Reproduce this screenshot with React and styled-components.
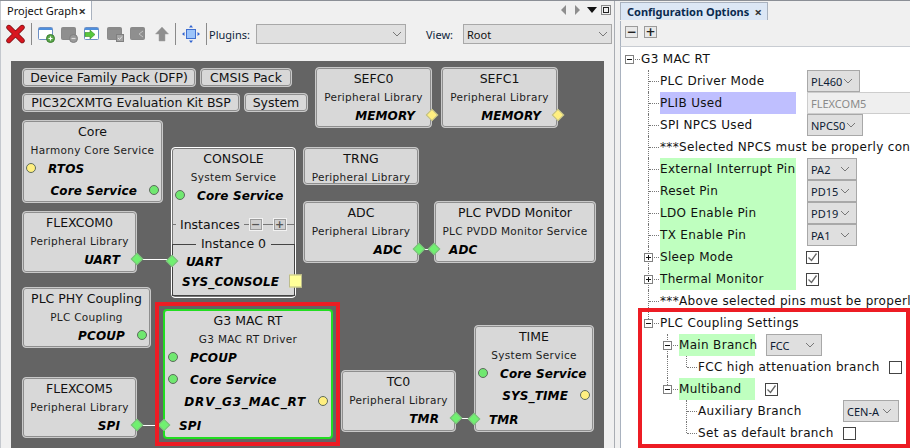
import React from "react";
import styled, { createGlobalStyle } from "styled-components";

const GlobalStyle = createGlobalStyle`
	html, body {
		margin: 0;
		padding: 0;
		background: #f0f0f0;
		overflow: hidden;
	}
	#root {
		width: 910px;
		height: 448px;
	}
	* {
		box-sizing: border-box;
	}
`;

const UI_FONT = `"DejaVu Sans", "Noto Sans", sans-serif`;
const CHROME_FONT = `"Noto Sans", "DejaVu Sans", sans-serif`;

// page layout
const Page = styled.div`
	display: flex;
	width: 910px;
	height: 448px;
	overflow: hidden;
	font-family: ${UI_FONT};
	font-size: 12px;
	color: #111;
	background: #f0f0f0;
	border-top: 1px solid #8b8f96;
`;

const GraphPanel = styled.section`
	display: flex;
	flex-direction: column;
	width: 615px;
	flex: none;
	border-left: 1px solid #c4c8ce;
	border-right: 1px solid #a9adb3;
`;

const ConfigPanel = styled.section`
	display: flex;
	flex-direction: column;
	flex: 1;
	min-width: 0;
	margin-left: 5px;
	padding-top: 1px;
	position: relative;
`;

// tabs
const TabBar = styled.div`
	display: flex;
	align-items: flex-start;
	height: 19px;
	flex: none;
`;

const Tab = styled.div`
	display: flex;
	align-items: center;
	justify-content: space-between;
	height: ${(p) => (p.$active ? 18 : 19)}px;
	width: ${(p) => p.$width}px;
	padding: 0 5px 0 6px;
	background: ${(p) => (p.$active ? "#dce7f5" : "#fff")};
	border: 1px solid #a9b2bf;
	border-left: ${(p) => (p.$active ? "1px solid #a9b2bf" : "none")};
	border-top: ${(p) => (p.$active ? "1px solid #a9b2bf" : "none")};
	border-bottom: none;
	font-family: ${CHROME_FONT};
	font-weight: ${(p) => (p.$active ? 700 : 400)};
	font-size: 11px;
	color: ${(p) => (p.$active ? "#0a2a4f" : "#111")};
	white-space: nowrap;
`;

const TabClose = styled.span`
	font-size: 13px;
	font-weight: 700;
	color: #333;
`;

const ViewControls = styled.div`
	display: flex;
	align-items: center;
	gap: 4px;
	margin-left: auto;
	height: 14px;
	margin-top: 2px;
	margin-right: 2px;
`;

// toolbar
const Toolbar = styled.div`
	display: flex;
	align-items: center;
	height: 41px;
	flex: none;
	padding: 0 0 13px 5px;
`;

const ToolIcon = styled.svg`
	flex: none;
	display: block;
	margin-right: ${(p) => p.$after ?? 6}px;
`;

const ToolSeparator = styled.span`
	width: 1px;
	height: 22px;
	flex: none;
	background: #8a8a8a;
	margin-right: ${(p) => p.$after ?? 6}px;
`;

const ToolLabel = styled.span`
	flex: none;
	width: ${(p) => p.$width}px;
	font-family: ${CHROME_FONT};
	font-size: 11px;
	color: #0e1e3a;
`;

const ToolCombo = styled.div`
	display: flex;
	align-items: center;
	justify-content: space-between;
	width: ${(p) => p.$width}px;
	height: 20px;
	flex: none;
	padding: 0 3px;
	background: #e0e0e0;
	border: 1px solid #a8a8a8;
	font-family: ${CHROME_FONT};
	font-size: 11px;
	margin-right: ${(p) => p.$after ?? 0}px;
`;

// diagram
const Canvas = styled.div`
	position: relative;
	width: 593px;
	height: 387px;
	margin-left: 10px;
	background: #646464;
	flex: none;
	overflow: hidden;
`;

const Pack = styled.div`
	position: absolute;
	left: ${(p) => p.$x - 11}px;
	top: ${(p) => p.$y - 61}px;
	width: ${(p) => p.$w}px;
	height: 19px;
	display: flex;
	align-items: center;
	justify-content: center;
	background: #d8d8d8;
	border: 1px solid #c9c9c9;
	border-radius: 4px;
	box-shadow: inset 0 0 0 1px #8e8e8e;
	font-size: 12.5px;
	white-space: nowrap;
`;

const Node = styled.div`
	position: absolute;
	left: ${(p) => p.$x - 11}px;
	top: ${(p) => p.$y - 61}px;
	width: ${(p) => p.$w}px;
	height: ${(p) => p.$h}px;
	background: #d8d8d8;
	border: ${(p) => (p.$focus ? "2px solid #22dd22" : p.$bright ? "1px solid #fff" : "1px solid #c9c9c9")};
	border-radius: 4px;
	box-shadow: ${(p) => (p.$focus ? "none" : `inset 0 0 0 1px ${p.$bright ? "#777" : "#8e8e8e"}`)};
`;

const NodeTitle = styled.div`
	height: 20px;
	line-height: 21px;
	text-align: center;
	font-size: 12.5px;
	white-space: nowrap;
	margin-top: ${(p) => (p.$focus ? "-1px" : 0)};
`;

const NodeSub = styled.div`
	height: 16px;
	line-height: 18px;
	text-align: center;
	font-size: 10.5px;
	letter-spacing: 0.3px;
	color: #1c1c1c;
	white-space: nowrap;
`;

const Port = styled.div`
	position: relative;
	display: flex;
	align-items: center;
	justify-content: ${(p) => (p.$side === "left" ? "flex-start" : "flex-end")};
	gap: 12px;
	height: 22px;
	margin-top: ${(p) => p.$gap ?? 0}px;
	padding: ${(p) => (p.$side === "left" ? `0 0 0 ${p.$pad ?? 3}px` : `0 ${p.$pad ?? 3}px 0 0`)};
	font-size: 12px;
	font-weight: 700;
	font-style: italic;
	letter-spacing: ${(p) => p.$spread ?? 0.12}px;
	color: #000;
	white-space: nowrap;
`;

const PortText = styled.span`
	padding-top: 2px;
`;

const Dot = styled.span`
	width: 10px;
	height: 10px;
	flex: none;
	border-radius: 50%;
	background: ${(p) => (p.$tone === "yellow" ? "#ffef80" : "#70e870")};
	border: 1px solid #5d6b5d;
`;

const Diamond = styled.span`
	position: absolute;
	top: 50%;
	left: ${(p) => (p.$side === "left" ? "-1px" : "auto")};
	right: ${(p) => (p.$side === "left" ? "auto" : "-1px")};
	width: 9px;
	height: 9px;
	transform: translate(${(p) => (p.$side === "left" ? "-4.5px" : "4.5px")}, -50%) rotate(45deg);
	background: ${(p) => (p.$tone === "yellow" ? "#ffef80" : "#70f070")};
	border: 1px solid ${(p) => (p.$tone === "yellow" ? "#b9b98a" : "#7fb77f")};
	z-index: 2;
`;

const SquarePin = styled.span`
	position: absolute;
	right: -8px;
	top: 50%;
	width: 13px;
	height: 13px;
	transform: translateY(-50%);
	background: #ffff99;
	border: 1px solid #bdbd8c;
	z-index: 2;
`;

const Wire = styled.span`
	position: absolute;
	left: ${(p) => p.$x - 11}px;
	top: ${(p) => p.$y - 61}px;
	width: ${(p) => p.$w}px;
	height: 1px;
	background: #fff;
	z-index: 1;
`;

const InstancesBar = styled.div`
	display: flex;
	align-items: center;
	height: 20px;
	margin-top: 8px;
	font-size: 12.5px;
`;

const BarStroke = styled.span`
	height: 1px;
	width: ${(p) => p.$w}px;
	flex: ${(p) => (p.$grow ? 1 : "none")};
	background: #777;
`;

const InstanceLabel = styled.span`
	margin: 0 4px;
`;

const MiniButton = styled.span`
	width: 14px;
	height: 13px;
	flex: none;
	display: flex;
	align-items: center;
	justify-content: center;
	background: #cfcfcf;
	border: 1px solid #f2f2f2;
	box-shadow: inset 0 0 0 1px #9c9c9c;
	font-size: 11px;
	font-weight: 700;
	line-height: 1;
	color: #555;
`;

const InstanceBox = styled.fieldset`
	margin: 2px 0 0;
	padding: 0;
	height: 60px;
	border: 1px solid #444;
	border-radius: 0;
	min-width: 0;
`;

const InstanceLegend = styled.legend`
	margin: 0 auto;
	padding: 0 5px;
	font-size: 12.5px;
	line-height: 16px;
`;

const Highlight = styled.div`
	position: absolute;
	left: ${(p) => p.$x}px;
	top: ${(p) => p.$y}px;
	width: ${(p) => p.$w}px;
	height: ${(p) => p.$h}px;
	border: 4px solid #ed1c24;
	pointer-events: none;
	z-index: 3;
`;

// config tree
const ConfigToolbar = styled.div`
	display: flex;
	align-items: center;
	gap: 6px;
	height: 26px;
	flex: none;
	padding: 0 0 4px 4px;
	border-left: 1px solid #a9b2bf;
	border-bottom: 1px solid #c8ccd2;
`;

const TreeToggle = styled.span`
	width: 13px;
	height: 12px;
	display: flex;
	align-items: center;
	justify-content: center;
	background: #e8e8e8;
	border: 1px solid #9a9a9a;
	font-size: 12px;
	font-weight: 700;
	line-height: 1;
	color: #222;
`;

const Tree = styled.div`
	flex: 1;
	background: #fff;
	border-left: 1px solid #a9b2bf;
	padding: 1px 0 0 1px;
	overflow: hidden;
`;

const TreeRow = styled.div`
	display: flex;
	align-items: center;
	height: 22px;
	white-space: nowrap;
`;

const Indent = styled.span`
	position: relative;
	width: 19px;
	height: 22px;
	flex: none;
	&::before {
		content: "";
		display: ${(p) => (p.$line ? "block" : "none")};
		position: absolute;
		left: 7px;
		top: 0;
		bottom: 0;
		border-left: 1px dotted #777;
	}
`;

const Twig = styled.span`
	position: relative;
	width: 19px;
	height: 22px;
	flex: none;
	&::before {
		content: "";
		display: ${(p) => (p.$root ? "none" : "block")};
		position: absolute;
		left: 7px;
		top: 0;
		height: ${(p) => (p.$last ? "11px" : "22px")};
		border-left: 1px dotted #777;
	}
	&::after {
		content: "";
		position: absolute;
		left: 8px;
		right: 1px;
		top: 11px;
		border-top: 1px dotted #777;
	}
`;

const Expander = styled.span`
	position: absolute;
	left: 3px;
	top: 7px;
	width: 9px;
	height: 9px;
	background: #fff;
	border: 1px solid #808080;
	z-index: 1;
	&::before {
		content: "";
		position: absolute;
		left: 1px;
		right: 1px;
		top: 3px;
		height: 1px;
		background: #111;
	}
	&::after {
		content: "";
		display: ${(p) => (p.$open ? "none" : "block")};
		position: absolute;
		top: 1px;
		bottom: 1px;
		left: 3px;
		width: 1px;
		background: #111;
	}
`;

const Label = styled.span`
	display: flex;
	align-items: center;
	flex: none;
	height: 22px;
	width: ${(p) => (p.$width ? `${p.$width}px` : "auto")};
	background: ${(p) => (p.$tone === "green" ? "#bfffbf" : p.$tone === "blue" ? "#bfbfff" : "transparent")};
	font-size: 12px;
	letter-spacing: 0.33px;
`;

const Combo = styled.span`
	display: flex;
	align-items: center;
	justify-content: space-between;
	width: ${(p) => p.$width}px;
	height: 22px;
	flex: none;
	margin-left: 11px;
	padding: 0 6px 0 3px;
	background: ${(p) => (p.$disabled ? "#efefef" : "#dfdfdf")};
	border: 1px solid ${(p) => (p.$disabled ? "#cdcdcd" : "#a8a8a8")};
	color: ${(p) => (p.$disabled ? "#8a8a8a" : "#0d1b33")};
	font-family: ${CHROME_FONT};
	font-size: 11px;
`;

const CheckBox = styled.span`
	display: flex;
	align-items: center;
	justify-content: center;
	width: 13px;
	height: 13px;
	flex: none;
	margin-left: 10px;
	background: #fff;
	border: 1px solid #444;
`;

const Chevron = () => (
	<svg width="10" height="6" viewBox="0 0 10 6">
		<path d="M1 1l4 4 4-4" fill="none" stroke="#777" strokeWidth="1" />
	</svg>
);

const Tick = () => (
	<svg width="11" height="11" viewBox="0 0 11 11">
		<path d="M1.5 5.5l3 3 5-7" fill="none" stroke="#666" strokeWidth="1.3" />
	</svg>
);

const DeleteIcon = () => (
	<ToolIcon width="19" height="20" viewBox="0 0 20 20" $after={6}>
		<path d="M3 3l14 14M17 3L3 17" stroke="#7d1015" strokeWidth="5.4" strokeLinecap="round" />
		<path d="M3 3l14 14M17 3L3 17" stroke="#d8161f" strokeWidth="3.8" strokeLinecap="round" />
	</ToolIcon>
);

const WindowIcon = ({ after, badge, gray, children }) => (
	<ToolIcon width="17" height="17" viewBox="0 0 17 17" $after={after}>
		<rect x="0.5" y="1.5" width="14" height="12" rx="1" fill={gray ? "#8f8f8f" : "#fff"} stroke={gray ? "#8a8a8a" : "#6d8fc4"} />
		<rect x="1" y="2" width="13" height="2" fill={gray ? "#8a8a8a" : "#4f8fdc"} />
		{children}
		{badge}
	</ToolIcon>
);

const GraphToolbar = () => (
	<Toolbar>
		<DeleteIcon />
		<ToolSeparator $after={6} />
		<WindowIcon
			after={6}
			badge={
				<>
					<circle cx="12.5" cy="12.5" r="4" fill="#5aa84a" stroke="#3c7d30" />
					<path d="M12.5 10.5v4M10.5 12.5h4" stroke="#fff" strokeWidth="1.2" />
				</>
			}
		/>
		<WindowIcon
			gray
			after={6}
			badge={
				<>
					<circle cx="12.5" cy="12.5" r="4" fill="#9a9a9a" stroke="#808080" />
					<path d="M10.5 12.5h4" stroke="#ddd" strokeWidth="1.2" />
				</>
			}
		/>
		<WindowIcon after={6}>
			<path d="M1 6.5h5V4l5 4.5-5 4.5v-2.5H1z" fill="#58c83c" stroke="#3a8a2a" strokeWidth="0.6" />
		</WindowIcon>
		<WindowIcon
			gray
			after={6}
			badge={
				<>
					<rect x="9.5" y="8.5" width="7" height="7" fill="#a5a5a5" stroke="#808080" />
					<path d="M11 12l1.5 1.5L15 10.5" fill="none" stroke="#e0e0e0" />
				</>
			}
		/>
		<WindowIcon gray after={8}>
			<path d="M13 5L9 8l4 3" fill="none" stroke="#c4c4c4" />
		</WindowIcon>
		<ToolIcon width="14" height="16" viewBox="0 0 14 16" $after={6}>
			<path d="M7 1l6.5 7H10v7H4V8H.5z" fill="#8e8e8e" stroke="#a0a0a0" strokeWidth="0.5" />
		</ToolIcon>
		<ToolSeparator $after={6} />
		<ToolIcon width="18" height="18" viewBox="0 0 18 18" $after={6}>
			<rect x="4.5" y="4.5" width="9" height="9" fill="#9cc4fa" stroke="#3f6fd0" />
			<path d="M9 0l2 2.5H7zM9 18l2-2.5H7zM0 9l2.5-2v4zM18 9l-2.5-2v4z" fill="#2f62d0" />
		</ToolIcon>
		<ToolSeparator $after={2} />
		<ToolLabel $width={47}>Plugins:</ToolLabel>
		<ToolCombo $width={150} $after={20}>
			<span />
			<Chevron />
		</ToolCombo>
		<ToolLabel $width={37}>View:</ToolLabel>
		<ToolCombo $width={149}>
			<span>Root</span>
			<Chevron />
		</ToolCombo>
	</Toolbar>
);

const nodeData = [
	{
		id: "core", x: 22, y: 120, w: 141, h: 83, title: "Core", sub: "Harmony Core Service",
		ports: [
			{ label: "RTOS", side: "left", dot: "yellow" },
			{ label: "Core Service", side: "right", dot: "green" },
		],
	},
	{
		id: "flexcom0", x: 22, y: 211, w: 115, h: 62, title: "FLEXCOM0", sub: "Peripheral Library",
		ports: [{ label: "UART", side: "right", diamond: "green" }],
	},
	{
		id: "phy", x: 22, y: 287, w: 129, h: 61, title: "PLC PHY Coupling", sub: "PLC Coupling",
		ports: [{ label: "PCOUP", side: "right", dot: "green" }],
	},
	{
		id: "flexcom5", x: 22, y: 377, w: 115, h: 61, title: "FLEXCOM5", sub: "Peripheral Library",
		ports: [{ label: "SPI", side: "right", diamond: "green" }],
	},
	{
		id: "sefc0", x: 315, y: 67, w: 117, h: 61, title: "SEFC0", sub: "Peripheral Library",
		ports: [{ label: "MEMORY", side: "right", diamond: "yellow" }],
	},
	{
		id: "sefc1", x: 441, y: 67, w: 117, h: 61, title: "SEFC1", sub: "Peripheral Library",
		ports: [{ label: "MEMORY", side: "right", diamond: "yellow" }],
	},
	{ id: "trng", x: 303, y: 147, w: 116, h: 38, title: "TRNG", sub: "Peripheral Library", ports: [] },
	{
		id: "adc", x: 303, y: 201, w: 116, h: 62, title: "ADC", sub: "Peripheral Library",
		ports: [{ label: "ADC", side: "right", diamond: "green" }],
	},
	{
		id: "pvdd", x: 434, y: 201, w: 162, h: 62, title: "PLC PVDD Monitor", sub: "PLC PVDD Monitor Service",
		ports: [{ label: "ADC", side: "left", diamond: "green" }],
	},
	{
		id: "g3", x: 163, y: 309, w: 170, h: 130, title: "G3 MAC RT", sub: "G3 MAC RT Driver", focus: true,
		ports: [
			{ label: "PCOUP", side: "left", dot: "green" },
			{ label: "Core Service", side: "left", dot: "green" },
			{ label: "DRV_G3_MAC_RT", side: "right", dot: "yellow", spread: 0.8 },
			{ label: "SPI", side: "left", diamond: "green", gap: 2 },
		],
	},
	{
		id: "tc0", x: 341, y: 370, w: 115, h: 62, title: "TC0", sub: "Peripheral Library",
		ports: [{ label: "TMR", side: "right", diamond: "green" }],
	},
	{
		id: "time", x: 474, y: 325, w: 120, h: 107, title: "TIME", sub: "System Service",
		ports: [
			{ label: "Core Service", side: "left", dot: "green" },
			{ label: "SYS_TIME", side: "right", dot: "yellow" },
			{ label: "TMR", side: "left", diamond: "green", gap: 2 },
		],
	},
];

const NodePort = ({ port }) => {
	const pad = port.diamond ? (port.side === "left" ? 14 : 16) : undefined;
	return (
		<Port $side={port.side} $gap={port.gap} $pad={pad} $spread={port.spread}>
			{port.side === "left" && port.dot && <Dot $tone={port.dot} />}
			{port.diamond && <Diamond $side={port.side} $tone={port.diamond} />}
			<PortText>{port.label}</PortText>
			{port.side === "right" && port.dot && <Dot $tone={port.dot} />}
		</Port>
	);
};

const ConsoleNode = () => (
	<Node $x={171} $y={147} $w={125} $h={151} $bright>
		<NodeTitle>CONSOLE</NodeTitle>
		<NodeSub>System Service</NodeSub>
		<NodePort port={{ label: "Core Service", side: "left", dot: "green" }} />
		<InstancesBar>
			<BarStroke $w={4} />
			<InstanceLabel>Instances</InstanceLabel>
			<BarStroke $w={5} />
			<MiniButton>−</MiniButton>
			<BarStroke $w={10} />
			<MiniButton>+</MiniButton>
			<BarStroke $grow />
		</InstancesBar>
		<InstanceBox>
			<InstanceLegend>Instance 0</InstanceLegend>
			<Port $side="left" $pad={13} $gap={-2}>
				<Diamond $side="left" $tone="green" />
				<PortText>UART</PortText>
			</Port>
			<Port $side="right" $pad={15} $gap={-2}>
				<PortText>SYS_CONSOLE</PortText>
				<SquarePin />
			</Port>
		</InstanceBox>
	</Node>
);

const DiagramCanvas = () => (
	<Canvas>
		<Pack $x={22} $y={68} $w={174}>Device Family Pack (DFP)</Pack>
		<Pack $x={200} $y={68} $w={92}>CMSIS Pack</Pack>
		<Pack $x={22} $y={93} $w={218}>PIC32CXMTG Evaluation Kit BSP</Pack>
		<Pack $x={244} $y={93} $w={64}>System</Pack>
		{nodeData.map((n) => (
			<Node key={n.id} $x={n.x} $y={n.y} $w={n.w} $h={n.h} $focus={n.focus}>
				<NodeTitle $focus={n.focus}>{n.title}</NodeTitle>
				<NodeSub>{n.sub}</NodeSub>
				{n.ports.map((p) => (
					<NodePort key={p.label} port={p} />
				))}
			</Node>
		))}
		<ConsoleNode />
		<Wire $x={137} $y={259} $w={33} />
		<Wire $x={137} $y={425} $w={27} />
		<Wire $x={419} $y={249} $w={15} />
		<Wire $x={456} $y={418} $w={18} />
		<Highlight $x={144} $y={241} $w={185} $h={144} />
	</Canvas>
);

const treeRows = [
	{ guides: [], root: true, open: true, label: "G3 MAC RT" },
	{ guides: [false], label: "PLC Driver Mode", width: 136, combo: { text: "PL460", width: 53 } },
	{ guides: [false], label: "PLIB Used", width: 136, tone: "blue", combo: { text: "FLEXCOM5", width: 110, disabled: true } },
	{ guides: [false], label: "SPI NPCS Used", width: 136, combo: { text: "NPCS0", width: 56 } },
	{ guides: [false], label: "***Selected NPCS must be properly configured" },
	{ guides: [false], label: "External Interrupt Pin", width: 136, tone: "green", combo: { text: "PA2", width: 50 } },
	{ guides: [false], label: "Reset Pin", width: 136, tone: "green", combo: { text: "PD15", width: 50 } },
	{ guides: [false], label: "LDO Enable Pin", width: 136, tone: "green", combo: { text: "PD19", width: 50 } },
	{ guides: [false], label: "TX Enable Pin", width: 136, tone: "green", combo: { text: "PA1", width: 50 } },
	{ guides: [false], label: "Sleep Mode", width: 136, tone: "green", closed: true, check: true },
	{ guides: [false], label: "Thermal Monitor", width: 136, tone: "green", closed: true, check: true },
	{ guides: [false], label: "***Above selected pins must be properly configured" },
	{ guides: [false], label: "PLC Coupling Settings", open: true, last: true },
	{ guides: [false, false], label: "Main Branch", width: 76, tone: "green", open: true, combo: { text: "FCC", width: 56 } },
	{ guides: [false, false, true], label: "FCC high attenuation branch", width: 181, last: true, check: false },
	{ guides: [false, false], label: "Multiband", width: 76, tone: "green", open: true, last: true, check: true },
	{ guides: [false, false, false], label: "Auxiliary Branch", width: 134, combo: { text: "CEN-A", width: 56 } },
	{ guides: [false, false, false], label: "Set as default branch", width: 135, last: true, check: false },
];

const ConfigTree = () => (
	<Tree>
		{treeRows.map((row) => (
			<TreeRow key={row.label}>
				{row.guides.map((line, i) => (
					<Indent key={i} $line={line} />
				))}
				<Twig $root={row.root} $last={row.last}>
					{(row.open || row.closed) && <Expander $open={row.open} />}
				</Twig>
				<Label $width={row.width} $tone={row.tone}>
					{row.label}
				</Label>
				{row.combo && (
					<Combo $width={row.combo.width} $disabled={row.combo.disabled}>
						{row.combo.text}
						{!row.combo.disabled && <Chevron />}
					</Combo>
				)}
				{row.check !== undefined && <CheckBox>{row.check && <Tick />}</CheckBox>}
			</TreeRow>
		))}
	</Tree>
);

export default function App() {
	return (
		<Page>
			<GlobalStyle />
			<GraphPanel>
				<TabBar>
					<Tab $width={91}>
						Project Graph
						<TabClose>×</TabClose>
					</Tab>
					<ViewControls>
						<svg width="52" height="12" viewBox="0 0 52 12">
							<path d="M6 1v10L1 6z" fill="#8e8e8e" />
							<path d="M15 1v10l5-5z" fill="#8e8e8e" />
							<path d="M27 3h10l-5 6z" fill="#111" />
							<rect x="41.5" y="1.5" width="9" height="9" fill="none" stroke="#222" strokeDasharray="1 1" />
							<rect x="43.5" y="3.5" width="5" height="5" fill="none" stroke="#222" />
						</svg>
					</ViewControls>
				</TabBar>
				<GraphToolbar />
				<DiagramCanvas />
			</GraphPanel>
			<ConfigPanel>
				<TabBar>
					<Tab $active $width={148}>
						Configuration Options
						<TabClose>×</TabClose>
					</Tab>
				</TabBar>
				<ConfigToolbar>
					<TreeToggle>−</TreeToggle>
					<TreeToggle>+</TreeToggle>
				</ConfigToolbar>
				<ConfigTree />
				<Highlight $x={18} $y={307} $w={272} $h={140} />
			</ConfigPanel>
		</Page>
	);
}
